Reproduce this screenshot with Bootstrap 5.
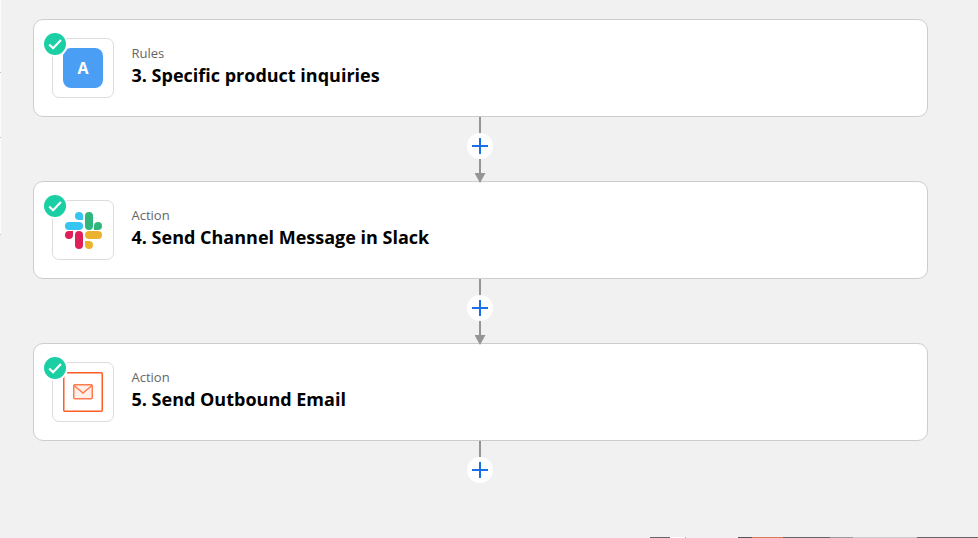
<!DOCTYPE html>
<html lang="en">
<head>
  <meta charset="UTF-8">
  <title>Workflow steps</title>
  <link href="https://cdn.jsdelivr.net/npm/bootstrap@5.3.3/dist/css/bootstrap.min.css" rel="stylesheet">
  <style>
    body { background: #f1f1f1; font-family: "Open Sans", "Liberation Sans", sans-serif; overflow: hidden; height: 538px; }
    .flow-wrap { width: 895px; margin-left: 33px; padding-top: 19px; }
    .step-box { height: 98px; padding: 18px 18px; background: #fff; border: 1px solid #cdcdcd; border-radius: 10px; }
    .app-tile { width: 62px; height: 60px; border: 1px solid #dcdcdc; border-radius: 7px; background: #fff; }
    .check-dot { position: absolute; left: -11px; top: -8px; width: 26px; height: 26px; }
    .tile-a { width: 40px; height: 40px; border-radius: 8px; background: #4a9ff5; color: #fff; font-size: 16px; font-weight: 700; }
    .step-kind { font-size: 13px; line-height: 18px; color: #666; }
    .step-name { font-size: 18px; line-height: 26px; font-weight: 700; color: #000; }
    .step-text { margin-left: 17.5px; margin-top: 6px; }
    .joint { height: 64px; }
    .joint-end { height: 58px; }
    .joint-line { position: absolute; left: 446px; top: 0; width: 2px; height: 100%; background: #959595; }
    .joint-end .joint-line { height: 20px; }
    .joint-tip { position: absolute; left: 441.5px; bottom: -2px; width: 11px; height: 10px; background: #959595; clip-path: polygon(0 0, 100% 0, 50% 100%); }
    .plus-btn { position: absolute; left: 434px; top: 16px; width: 26px; height: 26px; border-radius: 50%; background: #fff; }
    .edge-strip { position: fixed; left: 0; right: 0; bottom: 0; height: 1px; background: linear-gradient(90deg, transparent 650px, #666 650px, #666 670px, #fff 670px, #fff 685px, #aaa 685px, #aaa 686px, transparent 686px, transparent 738px, #555 738px, #555 752px, #d9785c 752px, #d9785c 783px, #636867 783px, #636867 830px, #9a9d9c 830px, #9a9d9c 853px, #c9cbca 853px, #c9cbca 917px, #666 917px); }
    .edge-left { position: fixed; left: 0; top: 0; width: 1px; height: 235px; background: linear-gradient(180deg, #fbfbfb 72px, #c4c4c4 72px, #c4c4c4 73px, #fbfbfb 73px, #fbfbfb 137px, #c4c4c4 137px, #c4c4c4 138px, #fbfbfb 138px, #fbfbfb 234px, #c4c4c4 234px); }
  </style>
</head>
<body>
<div class="flow-wrap">

  <div class="step-box d-flex">
    <div class="app-tile position-relative d-flex align-items-center justify-content-center flex-shrink-0">
      <div class="tile-a d-flex align-items-center justify-content-center">A</div>
      <svg class="check-dot" viewBox="0 0 26 26"><circle cx="13" cy="13" r="13" fill="#fff"/><circle cx="13" cy="13" r="11" fill="#1bcfa5"/><path d="M7.2 13.5l3.9 3.8 7.8-8.2" fill="none" stroke="#fff" stroke-width="2.2"/></svg>
    </div>
    <div class="step-text">
      <div class="step-kind">Rules</div>
      <div class="step-name">3. Specific product inquiries</div>
    </div>
  </div>

  <div class="joint position-relative">
    <div class="joint-line"></div>
    <div class="joint-tip"></div>
    <div class="plus-btn d-flex align-items-center justify-content-center">
      <svg width="16" height="16" viewBox="0 0 16 16"><path d="M8 0v16M0 8h16" stroke="#1a6ee8" stroke-width="2"/></svg>
    </div>
  </div>

  <div class="step-box d-flex">
    <div class="app-tile position-relative d-flex align-items-center justify-content-center flex-shrink-0">
      <svg width="37" height="37" viewBox="0 0 37 37">
        <path d="M14 0a4 4 0 0 1 4 4v4h-4a4 4 0 0 1 0-8z" fill="#36c5f0"/><rect x="0" y="10" width="18" height="8" rx="4" fill="#36c5f0"/>
        <rect x="20" y="0" width="8" height="18" rx="4" fill="#2eb67d"/><path d="M29 18v-4a4 4 0 1 1 4 4z" fill="#2eb67d"/>
        <path d="M8 19v4a4 4 0 1 1-4-4z" fill="#e01e5a"/><rect x="10" y="19" width="8" height="18" rx="4" fill="#e01e5a"/>
        <rect x="20" y="19" width="17" height="8" rx="4" fill="#ecb22e"/><path d="M20 29h4a4 4 0 1 1-4 4z" fill="#ecb22e"/>
      </svg>
      <svg class="check-dot" viewBox="0 0 26 26"><circle cx="13" cy="13" r="13" fill="#fff"/><circle cx="13" cy="13" r="11" fill="#1bcfa5"/><path d="M7.2 13.5l3.9 3.8 7.8-8.2" fill="none" stroke="#fff" stroke-width="2.2"/></svg>
    </div>
    <div class="step-text">
      <div class="step-kind">Action</div>
      <div class="step-name">4. Send Channel Message in Slack</div>
    </div>
  </div>

  <div class="joint position-relative">
    <div class="joint-line"></div>
    <div class="joint-tip"></div>
    <div class="plus-btn d-flex align-items-center justify-content-center">
      <svg width="16" height="16" viewBox="0 0 16 16"><path d="M8 0v16M0 8h16" stroke="#1a6ee8" stroke-width="2"/></svg>
    </div>
  </div>

  <div class="step-box d-flex">
    <div class="app-tile position-relative d-flex align-items-center justify-content-center flex-shrink-0">
      <svg width="40" height="40" viewBox="0 0 40 40" fill="none" stroke="#ff5c26">
        <rect x=".75" y=".75" width="38.5" height="38.5" rx="1" stroke-width="1.5"/>
        <rect x="10.75" y="12.75" width="18.5" height="14" rx="1" fill="#fff1ea" stroke-width="1.5" stroke="#ff7a4d"/>
        <path d="M11 13.5l9 7.5 9-7.5" stroke-width="1.5" stroke="#ff7a4d"/>
      </svg>
      <svg class="check-dot" viewBox="0 0 26 26"><circle cx="13" cy="13" r="13" fill="#fff"/><circle cx="13" cy="13" r="11" fill="#1bcfa5"/><path d="M7.2 13.5l3.9 3.8 7.8-8.2" fill="none" stroke="#fff" stroke-width="2.2"/></svg>
    </div>
    <div class="step-text">
      <div class="step-kind">Action</div>
      <div class="step-name">5. Send Outbound Email</div>
    </div>
  </div>

  <div class="joint-end position-relative">
    <div class="joint-line"></div>
    <div class="plus-btn d-flex align-items-center justify-content-center">
      <svg width="16" height="16" viewBox="0 0 16 16"><path d="M8 0v16M0 8h16" stroke="#1a6ee8" stroke-width="2"/></svg>
    </div>
  </div>

</div>
<div class="edge-left"></div>
<div class="edge-strip"></div>
</body>
</html>
